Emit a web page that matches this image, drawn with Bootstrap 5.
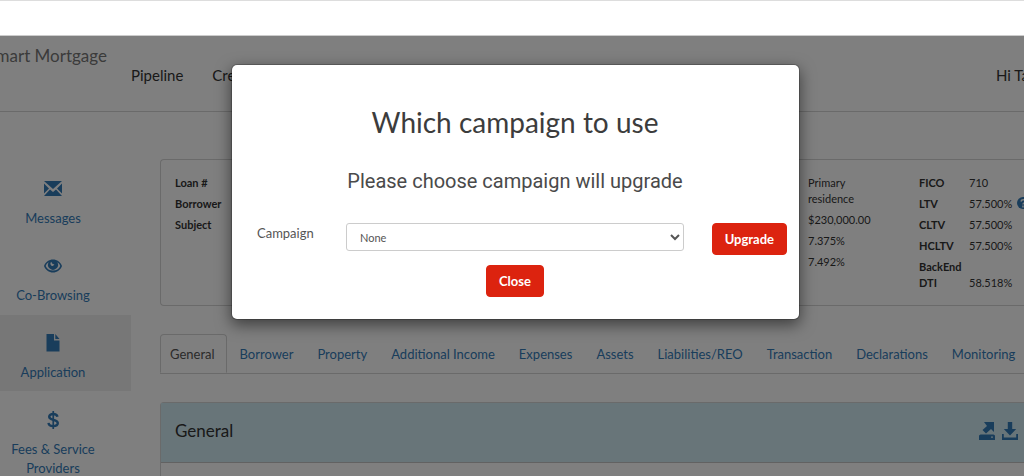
<!DOCTYPE html>
<html lang="en">
<head>
<meta charset="utf-8">
<meta name="viewport" content="width=device-width, initial-scale=1">
<title>Smart Mortgage</title>
<link href="https://cdn.jsdelivr.net/npm/bootstrap@5.3.0/dist/css/bootstrap.min.css" rel="stylesheet">
<style>
  body { font-family: Lato, "Liberation Sans", sans-serif; font-size: 13px; line-height: 20px; color: #333; background: #fff; }
  a { color: #337ab7; text-decoration: none; }
  .top-strip { height: 36px; border-top: 1px solid #ddd; border-bottom: 1px solid #ccc; }
  .app-header { height: 76px; border-bottom: 1px solid #d4d4d4; }
  .brand { width: 107px; font-size: 17px; color: #777; padding-top: 10px; }
  .main-links { font-size: 15px; padding: 29px 0 0 24px; gap: 29px; }
  .main-links a, .greeting { color: #333; }
  .greeting { font-size: 15px; padding-top: 29px; width: 28px; }
  .sidebar { width: 131px; padding-top: 49px; }
  .side-item { display: flex; flex-direction: column; align-items: center; gap: 11px; padding: 19px 25px 9px 0; margin-bottom: 1px; line-height: 19px; text-align: center; }
  .side-item.active { background: #eee; }
  .side-item svg { width: 18px; height: 18px; fill: #337ab7; }
  .content-area { padding: 47px 0 0 29px; min-width: 0; }
  .summary { height: 147px; border: 1px solid #d4d4d4; border-right: 0; border-radius: 4px 0 0 4px; padding: 15px 0 0 14px; font-size: 11px; line-height: 16px; }
  .summary th, .summary td { padding: 0 0 5px; vertical-align: bottom; color: #333; }
  .summary th { width: 50px; }
  .summary table { table-layout: fixed; }
  .terms { width: 111px; }
  .ratios { width: 105px; }
  .tab-bar { margin-top: 28px; flex-wrap: nowrap; overflow: hidden; gap: 3px; border-color: #d4d4d4; }
  .tab-bar .nav-link { padding: 9px 10px 8px 9px; margin-bottom: 0; color: #337ab7; white-space: nowrap; border-radius: 4px 4px 0 0; }
  .tab-bar .nav-link.active { color: #555; border-color: #d4d4d4 #d4d4d4 #fff; padding-right: 11px; }
  .section-box { margin-top: 28px; height: 240px; border: 1px solid #d4d4d4; border-right: 0; border-radius: 4px 0 0 0; }
  .section-head { height: 60px; background: #d0eaf2; border-bottom: 1px solid #c4c4c4; padding: 0 0 3px 14px; }
  .section-head h2 { font-size: 17px; font-weight: 400; line-height: 20px; margin: 0; }
  .tools { gap: 7px; width: 45px; }
  .tools svg { display: block; width: 16px; height: 18px; fill: #337ab7; }
  .shade { inset: 36px 0 0 0; background: rgba(0,0,0,.5); padding: 28px 8px 0 15px; }
  .dialog-box { max-width: 569px; border: 1px solid rgba(0,0,0,.2); background-clip: padding-box; border-radius: 6px; box-shadow: 0 5px 15px rgba(0,0,0,.5); padding: 37px 12px 22px 25px; }
  .dialog-box h1 { font-size: 28px; line-height: 40px; margin: 0 0 25px; padding-right: 14px; color: #3c3c3c; }
  .dialog-box p { font: 20px/28px Roboto, sans-serif; margin: 0 0 28px; padding-right: 14px; color: #4a4a4a; }
  .field-row label { width: 89px; color: #555; }
  .field-row select { height: 28px; appearance: auto; font-size: 11px; line-height: 16px; padding: 5px 9px; color: #555; border-color: #ccc; border-radius: 3px; margin-right: 28px; }
  .close-row { margin-top: 10px; padding-right: 14px; }
  .btn-red { --bs-btn-color: #fff; --bs-btn-bg: #dc230f; --bs-btn-border-color: #dc230f; --bs-btn-hover-color: #fff; --bs-btn-hover-bg: #b81c0c; --bs-btn-font-size: 13px; --bs-btn-font-weight: 700; --bs-btn-padding-x: 12px; --bs-btn-padding-y: 5px; --bs-btn-line-height: 20px; --bs-btn-border-radius: 4px; }
</style>
</head>
<body>
<div class="vh-100 overflow-hidden position-relative d-flex flex-column">
  <div class="top-strip flex-shrink-0"></div>
  <header class="app-header d-flex flex-shrink-0">
    <div class="brand d-flex justify-content-end overflow-hidden text-nowrap">Smart Mortgage</div>
    <nav class="main-links d-flex flex-fill"><a href="#">Pipeline</a><a href="#">Create</a></nav>
    <div class="greeting text-nowrap overflow-hidden">Hi Ta</div>
  </header>
  <div class="d-flex flex-fill">
    <nav class="sidebar flex-shrink-0">
      <a class="side-item" href="#">
        <svg viewBox="0 0 18 18"><path d="M0 1h18L9 9zM0 3.500L5 8.500 0 13.500zM18 3.500L13 8.500l5 5zM6 9.500l3 2.500L12 9.500l6 6.500H0z"/></svg>Messages</a>
      <a class="side-item" href="#">
        <svg viewBox="0 0 18 18"><path fill-rule="evenodd" d="M9 2.500C5 2.500 1.500 5 0 9c1.500 4 5 6.500 9 6.500S16.500 13 18 9C16.500 5 13 2.500 9 2.500zM9 13.500C5.500 13.500 3 12 1.700 9 2.300 7.300 3.300 6 4.700 5.200a5 5 0 1 0 8.600 0C14.700 6 15.700 7.300 16.300 9 15 12 12.500 13.500 9 13.500zM7.500 5C6 5.300 6 8 7.500 8.700c1.500.6 2.700-.3 2.800-1.700C9.500 7.500 8 7 7.500 5z"/></svg>Co-Browsing</a>
      <a class="side-item active" href="#">
        <svg viewBox="0 0 18 18"><path d="M2.500 0H10v6.500h5.500V17.500h-13zM11.300 0l4.200 5h-4.200z"/></svg>Application</a>
      <a class="side-item" href="#">
        <svg viewBox="0 0 18 18"><path fill="none" stroke="#337ab7" stroke-width="2.400" d="M13.500 5.800C13 3.800 11.500 3 9.200 3 6.800 3 5.200 4 5.200 5.800c0 4.200 8.600 2 8.600 6.300 0 2-1.800 3-4.600 3-2.700 0-4.400-1-4.700-3.300"/><path d="M8.400 0h1.700v18H8.400z"/></svg>Fees &amp; Service<br>Providers</a>
    </nav>
    <main class="content-area flex-fill">
      <section class="summary d-flex overflow-hidden">
        <div class="flex-fill">
          <table><tr><th>Loan #</th></tr><tr><th>Borrower</th></tr><tr><th>Subject</th></tr></table>
        </div>
        <table class="terms align-self-start flex-shrink-0">
          <tr><td>Primary<br>residence</td></tr><tr><td>$230,000.00</td></tr><tr><td>7.375%</td></tr><tr><td>7.492%</td></tr>
        </table>
        <table class="ratios align-self-start flex-shrink-0">
          <tr><th>FICO</th><td>710</td></tr>
          <tr><th>LTV</th><td class="text-nowrap">57.500% <svg class="align-top" width="14" height="14" viewBox="0 0 14 14"><circle cx="8" cy="7" r="6" fill="#337ab7"/><path d="M6 5.500c.5-2.600 4.500-2.300 4.500 0 0 1.500-2.500 1.300-2.500 3M8 9.500v2" fill="none" stroke="#fff" stroke-width="1.500"/></svg></td></tr>
          <tr><th>CLTV</th><td>57.500%</td></tr>
          <tr><th>HCLTV</th><td>57.500%</td></tr>
          <tr><th>BackEnd DTI</th><td>58.518%</td></tr>
        </table>
      </section>
      <nav class="nav nav-tabs tab-bar">
        <a class="nav-link active" href="#">General</a>
        <a class="nav-link" href="#">Borrower</a>
        <a class="nav-link" href="#">Property</a>
        <a class="nav-link" href="#">Additional Income</a>
        <a class="nav-link" href="#">Expenses</a>
        <a class="nav-link" href="#">Assets</a>
        <a class="nav-link" href="#">Liabilities/REO</a>
        <a class="nav-link" href="#">Transaction</a>
        <a class="nav-link" href="#">Declarations</a>
        <a class="nav-link" href="#">Monitoring</a>
      </nav>
      <section class="section-box">
        <div class="section-head d-flex align-items-center justify-content-between">
          <h2>General</h2>
          <div class="tools d-flex">
            <a href="#" aria-label="Export"><svg viewBox="0 0 16 18"><path fill-rule="evenodd" d="M5 0h10v10l-3-3-5 4.500L3.500 8 8 4zM1.500 12.500h13l1.500 1V18H0v-4.500zM12 14.500v1.200h2v-1.200z"/></svg></a>
            <a href="#" aria-label="Import"><svg viewBox="0 0 16 18"><path d="M5.800 0h4.400v7h4L8 13.500 1.800 7h4zM0 12h1.800v3.500h12.400V12H16v6H0z"/></svg></a>
          </div>
        </div>
      </section>
    </main>
  </div>

  <div class="shade position-absolute">
    <div class="dialog-box bg-white mx-auto" role="dialog" aria-labelledby="dialog-title">
      <h1 id="dialog-title" class="text-center fw-normal">Which campaign to use</h1>
      <p class="text-center">Please choose campaign will upgrade</p>
      <div class="field-row d-flex align-items-start">
        <label class="flex-shrink-0" for="campaign">Campaign</label>
        <select id="campaign" class="form-control"><option>None</option></select>
        <button type="button" class="btn btn-red flex-shrink-0">Upgrade</button>
      </div>
      <div class="close-row d-flex justify-content-center"><button type="button" class="btn btn-red">Close</button></div>
    </div>
  </div>
</div>
<script src="https://cdn.jsdelivr.net/npm/bootstrap@5.3.0/dist/js/bootstrap.bundle.min.js"></script>
</body>
</html>
